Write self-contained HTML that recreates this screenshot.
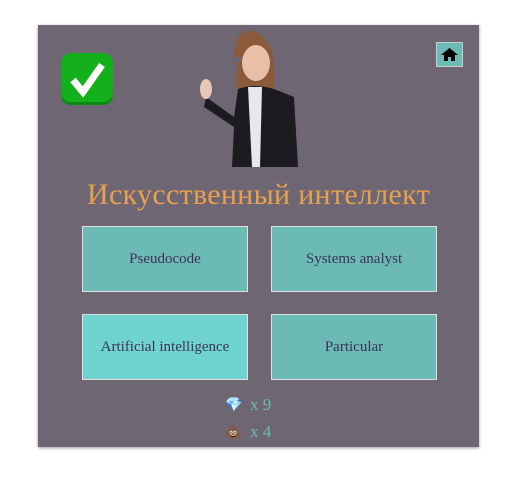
<!DOCTYPE html>
<html><head><meta charset="utf-8"><style>
body{margin:0;background:#fff;width:512px;height:478px;position:relative;overflow:hidden;font-family:"Liberation Serif",serif}
.panel{position:absolute;left:38px;top:25px;width:441px;height:422px;background:#6e6773;box-shadow:0 1px 3px rgba(0,0,0,.4)}
.btn{position:absolute;width:166px;height:66px;background:#6bbab6;border:1px solid #e0e0e0;box-sizing:border-box;color:#3c3458;font-size:15px;display:flex;align-items:center;justify-content:center}
.title{position:absolute;left:0;width:441px;top:153px;text-align:center;color:#e8a04e;font-size:30px;letter-spacing:0.3px}
.cnt{position:absolute;color:#6bbab6;font-size:17px;left:212px}
</style></head><body>
<div class="panel">
<div style="position:absolute;left:23px;top:28px;width:52px;height:52px;border-radius:10px;background:#14b01c;box-shadow:inset 0 -3px 0 #0a8a12">
<svg width="52" height="52"><path d="M12 27 L22 39 L41 12" stroke="#fff" stroke-width="7" fill="none"/></svg></div>
<div style="position:absolute;left:398px;top:17px;width:27px;height:25px;background:#6bbab6;border:1px solid #ccc;box-sizing:border-box">
<svg width="25" height="23"><path d="M12.5 5 L4 12 H7 V18 H11 V14 H14 V18 H18 V12 H21 Z" fill="#000"/></svg></div>
<svg style="position:absolute;left:156px;top:2px" width="112" height="140">
<path d="M54 30 Q40 30 42 60 L48 70 L78 70 Q84 40 76 20 Q66 2 54 4 Q40 6 40 30Z" fill="#8a5a3a"/>
<ellipse cx="62" cy="36" rx="14" ry="18" fill="#e8c0a8"/>
<path d="M44 62 Q60 56 80 62 L100 70 L104 140 L38 140 L40 100 L10 80 L12 70 L40 90Z" fill="#1c1c20"/>
<path d="M54 60 L68 60 L66 140 L58 140Z" fill="#e8e6ee"/>
<ellipse cx="12" cy="62" rx="6" ry="10" fill="#e8c8b8"/>
</svg>
<div class="title">Искусственный интеллект</div>
<div class="btn" style="left:44px;top:201px">Pseudocode</div>
<div class="btn" style="left:233px;top:201px">Systems analyst</div>
<div class="btn" style="left:44px;top:289px;background:#6fd3cf">Artificial intelligence</div>
<div class="btn" style="left:233px;top:289px">Particular</div>
<div style="position:absolute;left:187px;top:372px;font-size:14px">💎</div>
<div class="cnt" style="top:370px">x 9</div>
<div style="position:absolute;left:187px;top:399px;font-size:13px">💩</div>
<div class="cnt" style="top:397px">x 4</div>
</div>
</body></html>
